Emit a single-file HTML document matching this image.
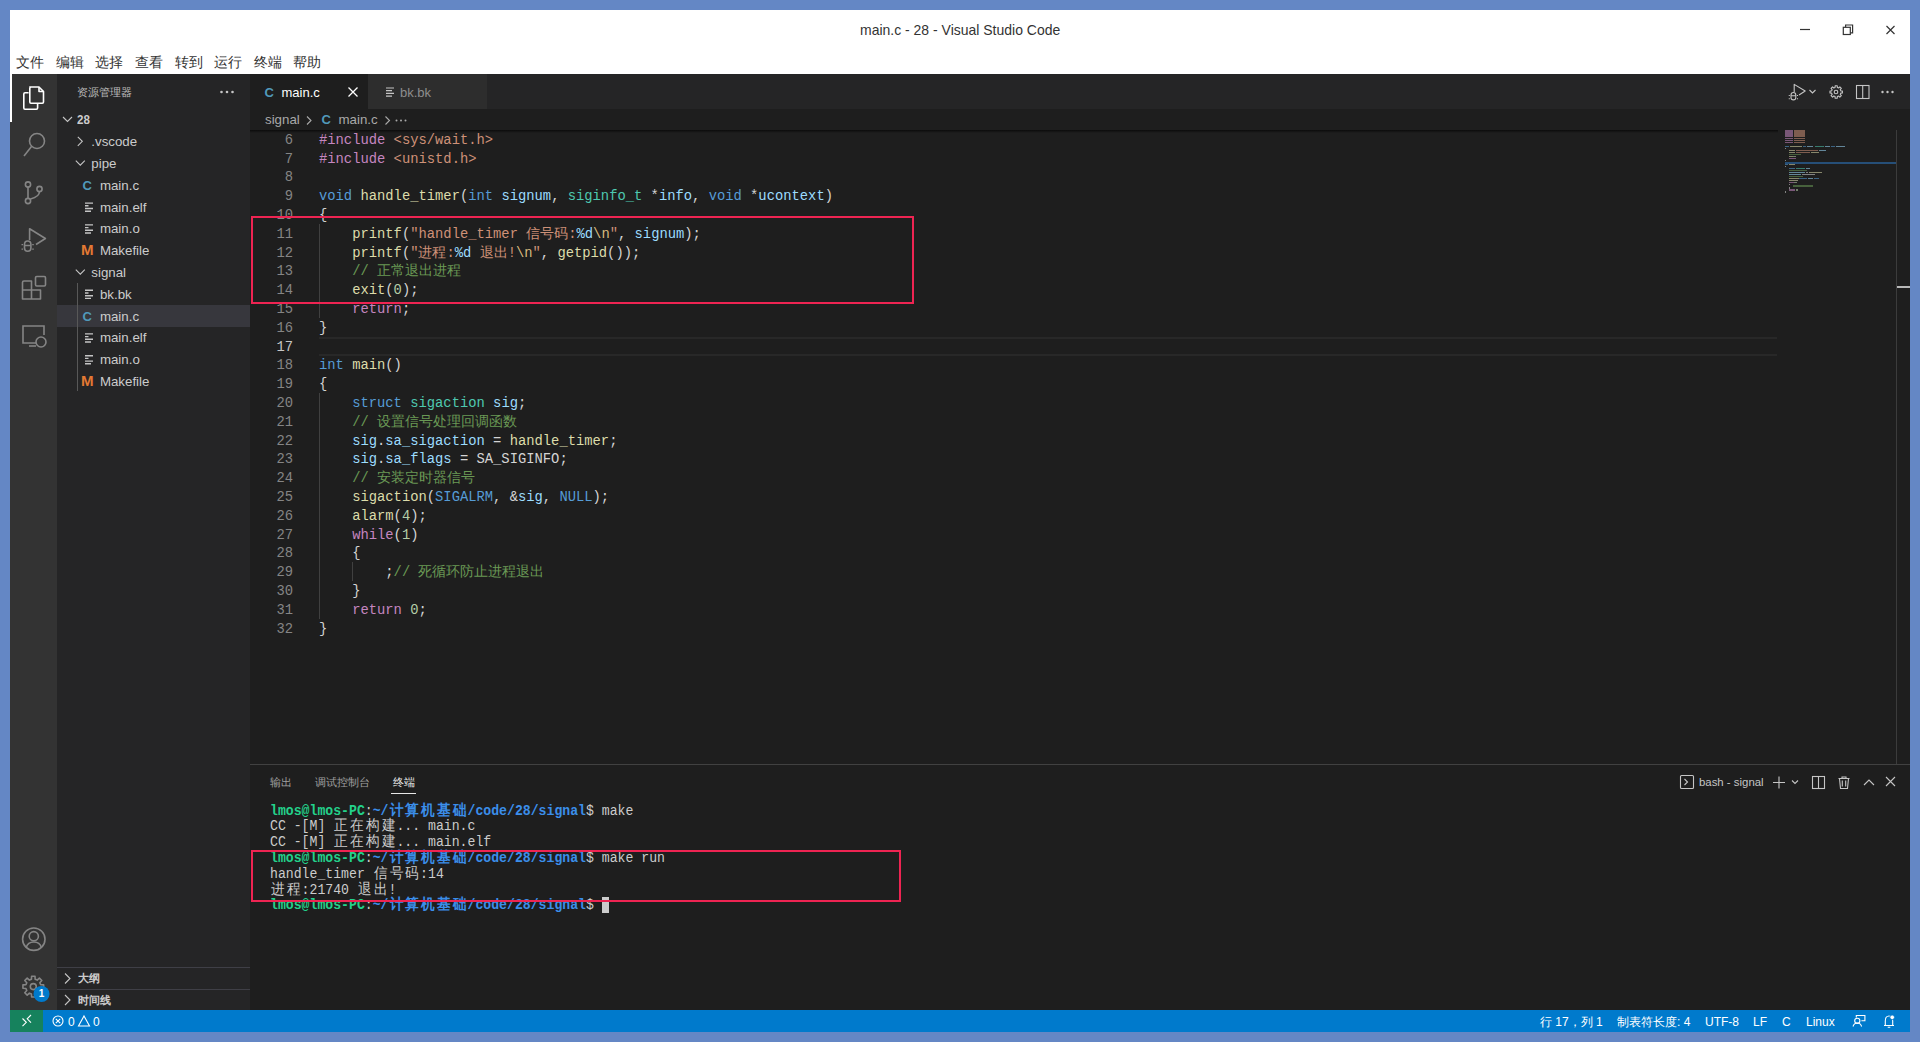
<!DOCTYPE html><html><head><meta charset="utf-8"><style>
*{box-sizing:border-box}
html,body{margin:0;padding:0}
body{width:1920px;height:1042px;overflow:hidden;background:#6487c5;position:relative;font-family:"Liberation Sans",sans-serif}
.a{position:absolute}
.t{white-space:pre}
svg{position:absolute;overflow:visible}
.menu{top:53px;font-size:13.5px;color:#333;line-height:20px;font-weight:500}
.code{font-family:"Liberation Mono",monospace;font-size:13.82px;line-height:18.8px;color:#d4d4d4;white-space:pre}
.ln{color:#858585;text-align:right;width:44px;left:249px}
.k{color:#569cd6}.c{color:#c586c0}.f{color:#dcdcaa}.s{color:#ce9178}.v{color:#9cdcfe}.ty{color:#4ec9b0}.cm{color:#6a9955}.n{color:#b5cea8}.e{color:#d7ba7d}
.tree{font-size:13.3px;color:#cccccc;line-height:22px}
.term{font-family:"Liberation Mono",monospace;font-size:14.5px;line-height:15.8px;transform:scaleX(0.9080);transform-origin:0 0;color:#cccccc;white-space:pre}
.w{display:inline-block;width:17.40px;text-align:center}
.g{color:#23d18b;font-weight:bold}.b{color:#3b8eea;font-weight:bold}
.sb{font-size:12px;color:#fff;line-height:22px;top:1010.8px}
</style></head><body>
<div class="a" style="left:10px;top:10px;width:1900px;height:64px;background:#fff"></div>
<div class="a t" style="left:859.5px;top:21px;font-size:15px;color:#333;line-height:18px;transform:scaleX(0.932);transform-origin:0 0">main.c - 28 - Visual Studio Code</div>
<div class="a t menu" style="left:16px">文件</div>
<div class="a t menu" style="left:56px">编辑</div>
<div class="a t menu" style="left:95px">选择</div>
<div class="a t menu" style="left:135px">查看</div>
<div class="a t menu" style="left:175px">转到</div>
<div class="a t menu" style="left:214px">运行</div>
<div class="a t menu" style="left:254px">终端</div>
<div class="a t menu" style="left:293px">帮助</div>
<svg style="left:0;top:0" width="1920" height="80"><g stroke="#333" stroke-width="1.2" fill="none"><line x1="1800" y1="29.5" x2="1810" y2="29.5"/><rect x="1843.3" y="27.3" width="7" height="7.2"/><path d="M1845.6 27.3v-2.3h7v7.9h-2.3"/><path d="M1886.5 26l8 8M1894.5 26l-8 8"/></g></svg>
<div class="a" style="left:10px;top:74px;width:47px;height:936px;background:#333333"></div>
<div class="a" style="left:57px;top:74px;width:192.5px;height:936px;background:#252526"></div>
<div class="a" style="left:249.5px;top:74px;width:1660.5px;height:936px;background:#1e1e1e"></div>
<div class="a" style="left:10px;top:1010px;width:1900px;height:22px;background:#007acc"></div>
<div class="a" style="left:10px;top:74px;width:2px;height:47.5px;background:#fff"></div>
<svg style="left:0;top:0" width="60" height="1010"><g fill="none" stroke-width="1.6"><g stroke="#fff" stroke-linejoin="round"><path d="M29.8 87h9.2l4.5 4.5v10.6q0 1.2-1.2 1.2h-11.3q-1.2 0-1.2-1.2v-13.9q0-1.2 1.2-1.2z"/><path d="M39 87v4.5h4.5"/><path d="M28.6 92.8h-3.6q-1.2 0-1.2 1.2v14.1q0 1.2 1.2 1.2h11.4q1.2 0 1.2-1.2v-4.8"/></g><g stroke="#858585"><circle cx="37" cy="141" r="7.5"/><path d="M31.5 146.5l-7.5 9.5"/></g><g stroke="#858585"><circle cx="28" cy="184.5" r="2.6"/><circle cx="39.5" cy="189" r="2.6"/><circle cx="28" cy="201" r="2.6"/><path d="M28 187.2v11.2M39.5 191.6q0 5-9 7.5"/></g><g stroke="#858585" stroke-linejoin="round"><path d="M29.6 240v-11.3l15.8 9.8-9.4 6"/><path d="M24.5 244.5q0-3.5 3.2-3.5t3.2 3.5v3.5q0 3.3-3.2 3.3t-3.2-3.3z"/><path d="M24.5 245.5h6.4M22.3 244v1.2M33 244v1.2M22.3 248.5v1.2M33 248.5v1.2"/></g><g stroke="#858585" stroke-linejoin="round"><path d="M22.5 299v-16.5q0-1.5 1.5-1.5h7.5v18zM22.5 290h18v9h-18M31.5 290v9"/><rect x="35.5" y="276.5" width="10" height="9.5" rx="1.2"/></g><g stroke="#858585"><path d="M36 343h-13v-17h21v9"/><path d="M29 346h7"/><circle cx="41" cy="342" r="5"/></g><g stroke="#858585"><circle cx="33.8" cy="939.2" r="11.2"/><circle cx="33.8" cy="936.2" r="4.6"/><path d="M26.2 947.5q1.5-5.5 7.6-5.5t7.6 5.5"/></g><g stroke="#858585" stroke-linejoin="round"><circle cx="33.3" cy="986.6" r="3"/><path d="M40.67 984.76L43.66 984.88L43.66 988.32L40.67 988.44L39.82 990.51L41.84 992.70L39.40 995.14L37.21 993.12L35.14 993.97L35.02 996.96L31.58 996.96L31.46 993.97L29.39 993.12L27.20 995.14L24.76 992.70L26.78 990.51L25.93 988.44L22.94 988.32L22.94 984.88L25.93 984.76L26.78 982.69L24.76 980.50L27.20 978.06L29.39 980.08L31.46 979.23L31.58 976.24L35.02 976.24L35.14 979.23L37.21 980.08L39.40 978.06L41.84 980.50L39.82 982.69Z"/></g></g><circle cx="41.5" cy="994" r="8" fill="#007acc"/></svg>
<div class="a" style="left:33.5px;top:986px;width:16px;height:16px;font-size:10px;font-weight:bold;color:#fff;text-align:center;line-height:16px">1</div>
<div class="a t" style="left:77px;top:84px;font-size:11px;color:#bbbbbb;line-height:16px">资源管理器</div>
<svg style="left:0;top:0" width="260" height="100"><g fill="#c5c5c5"><circle cx="221.5" cy="92" r="1.3"/><circle cx="227" cy="92" r="1.3"/><circle cx="232.5" cy="92" r="1.3"/></g></svg>
<div class="a" style="left:57px;top:304.80px;width:192.5px;height:21.8px;background:#37373d"></div>
<div class="a" style="left:77px;top:283.00px;width:1px;height:108.20px;background:#585858"></div>
<div class="a t tree" style="left:77px;top:109.30px;line-height:21.8px;font-weight:bold;transform:scaleX(0.87);transform-origin:0 0">28</div>
<div class="a t tree" style="left:91.3px;top:131.10px;line-height:21.8px;font-weight:normal">.vscode</div>
<div class="a t tree" style="left:91.3px;top:152.90px;line-height:21.8px;font-weight:normal">pipe</div>
<div class="a t" style="left:82.5px;top:174.70px;font-size:13px;font-weight:bold;color:#519aba;line-height:21.8px">C</div>
<div class="a t tree" style="left:99.9px;top:174.70px;line-height:21.8px;font-weight:normal">main.c</div>
<div class="a t tree" style="left:99.9px;top:196.50px;line-height:21.8px;font-weight:normal">main.elf</div>
<div class="a t tree" style="left:99.9px;top:218.30px;line-height:21.8px;font-weight:normal">main.o</div>
<div class="a t" style="left:80.5px;top:240.10px;font-size:14px;font-weight:bold;color:#e37933;line-height:21.8px;transform:scaleX(1.08);transform-origin:0 0">M</div>
<div class="a t tree" style="left:99.9px;top:240.10px;line-height:21.8px;font-weight:normal">Makefile</div>
<div class="a t tree" style="left:91.3px;top:261.90px;line-height:21.8px;font-weight:normal">signal</div>
<div class="a t tree" style="left:99.9px;top:283.70px;line-height:21.8px;font-weight:normal">bk.bk</div>
<div class="a t" style="left:82.5px;top:305.50px;font-size:13px;font-weight:bold;color:#519aba;line-height:21.8px">C</div>
<div class="a t tree" style="left:99.9px;top:305.50px;line-height:21.8px;font-weight:normal">main.c</div>
<div class="a t tree" style="left:99.9px;top:327.30px;line-height:21.8px;font-weight:normal">main.elf</div>
<div class="a t tree" style="left:99.9px;top:349.10px;line-height:21.8px;font-weight:normal">main.o</div>
<div class="a t" style="left:80.5px;top:370.90px;font-size:14px;font-weight:bold;color:#e37933;line-height:21.8px;transform:scaleX(1.08);transform-origin:0 0">M</div>
<div class="a t tree" style="left:99.9px;top:370.90px;line-height:21.8px;font-weight:normal">Makefile</div>
<svg style="left:0;top:0" width="260" height="1010"><path d="M63.0 117.0l4.5 4.5 4.5-4.5" stroke="#c5c5c5" stroke-width="1.1" fill="none"/><path d="M77.8 136.8l4.5 4.5-4.5 4.5" stroke="#c5c5c5" stroke-width="1.1" fill="none"/><path d="M75.8 160.6l4.5 4.5 4.5-4.5" stroke="#c5c5c5" stroke-width="1.1" fill="none"/><g stroke="#c5c5c5" stroke-width="1.4"><path d="M85 203.1h8M85 205.8h3.5M85 208.5h8M85 211.2h6"/></g><g stroke="#c5c5c5" stroke-width="1.4"><path d="M85 224.9h8M85 227.6h3.5M85 230.3h8M85 233.0h6"/></g><path d="M75.8 269.6l4.5 4.5 4.5-4.5" stroke="#c5c5c5" stroke-width="1.1" fill="none"/><g stroke="#c5c5c5" stroke-width="1.4"><path d="M85 290.3h8M85 293.0h3.5M85 295.7h8M85 298.4h6"/></g><g stroke="#c5c5c5" stroke-width="1.4"><path d="M85 333.9h8M85 336.6h3.5M85 339.3h8M85 342.0h6"/></g><g stroke="#c5c5c5" stroke-width="1.4"><path d="M85 355.7h8M85 358.4h3.5M85 361.1h8M85 363.8h6"/></g></svg>
<div class="a" style="left:57px;top:967px;width:192.5px;height:1px;background:#3f3f46"></div>
<div class="a" style="left:57px;top:989px;width:192.5px;height:1px;background:#3f3f46"></div>
<svg style="left:0;top:0" width="260" height="1010"><g stroke="#c5c5c5" stroke-width="1.1" fill="none"><path d="M65 973.5l5 5-5 5"/><path d="M65 995l5 5-5 5"/></g></svg>
<div class="a t" style="left:77.5px;top:970px;font-size:11px;font-weight:bold;color:#cccccc;line-height:16px">大纲</div>
<div class="a t" style="left:77.5px;top:992px;font-size:11px;font-weight:bold;color:#cccccc;line-height:16px">时间线</div>
<div class="a" style="left:249.5px;top:74px;width:1660.5px;height:35px;background:#252526"></div>
<div class="a" style="left:249.5px;top:74px;width:118px;height:35px;background:#1e1e1e"></div>
<div class="a" style="left:367.5px;top:74px;width:119px;height:35px;background:#2d2d2d"></div>
<div class="a t" style="left:264.5px;top:83.7px;font-size:13px;font-weight:bold;color:#519aba;line-height:18px">C</div>
<div class="a t" style="left:281.5px;top:83.7px;font-size:13px;color:#ffffff;line-height:18px">main.c</div>
<svg style="left:0;top:0" width="500" height="110"><path d="M348.5 87.5l9 9M357.5 87.5l-9 9" stroke="#fff" stroke-width="1.3"/><g stroke="#c5c5c5" stroke-width="1.2"><path d="M386 88h8M386 90.7h6M386 93.4h8M386 96.1h6"/></g></svg>
<div class="a t" style="left:400px;top:83.7px;font-size:13px;color:#8d8d8d;line-height:18px">bk.bk</div>
<svg style="left:0;top:0" width="1920" height="110"><g fill="none" stroke="#c5c5c5" stroke-width="1.1"><path stroke-linejoin="round" d="M1794.2 92v-7.6l11 6.6-6.2 4"/><path d="M1791 95q0-2.5 2.4-2.5t2.4 2.5v2.5q0 2.4-2.4 2.4t-2.4-2.4zM1791 95.8h4.8M1789.3 95v1M1797.5 95v1M1789.3 98.3v1M1797.5 98.3v1"/><path d="M1809.5 90l3 3 3-3"/><circle cx="1836" cy="92" r="1.8"/><path stroke-linejoin="round" d="M1840.76 90.86L1842.41 90.97L1842.41 93.03L1840.76 93.14L1840.23 94.42L1841.33 95.66L1839.86 97.13L1838.62 96.03L1837.34 96.56L1837.23 98.21L1835.17 98.21L1835.06 96.56L1833.78 96.03L1832.54 97.13L1831.07 95.66L1832.17 94.42L1831.64 93.14L1829.99 93.03L1829.99 90.97L1831.64 90.86L1832.17 89.58L1831.07 88.34L1832.54 86.87L1833.78 87.97L1835.06 87.44L1835.17 85.79L1837.23 85.79L1837.34 87.44L1838.62 87.97L1839.86 86.87L1841.33 88.34L1840.23 89.58Z"/><rect x="1856.5" y="85.5" width="12.5" height="13"/><path d="M1862.7 85.5v13"/></g><g fill="#c5c5c5"><circle cx="1882.5" cy="92" r="1.2"/><circle cx="1887.5" cy="92" r="1.2"/><circle cx="1892.5" cy="92" r="1.2"/></g></svg>
<div class="a t" style="left:265px;top:111px;font-size:13.3px;color:#a9a9a9;line-height:18px">signal</div>
<div class="a t" style="left:321.5px;top:111px;font-size:13px;font-weight:bold;color:#519aba;line-height:18px">C</div>
<div class="a t" style="left:338.5px;top:111px;font-size:13.3px;color:#a9a9a9;line-height:18px">main.c</div>
<svg style="left:0;top:0" width="500" height="140"><g fill="none" stroke="#a9a9a9" stroke-width="1.1"><path d="M307 116.5l4 4-4 4M385.5 116.5l4 4-4 4"/></g><g fill="#a9a9a9"><circle cx="396.5" cy="120.5" r="1"/><circle cx="401" cy="120.5" r="1"/><circle cx="405.5" cy="120.5" r="1"/></g></svg>
<div class="a" style="left:249.5px;top:130px;width:1528px;height:3px;background:linear-gradient(#000000a0,#00000000)"></div>
<div class="a" style="left:319px;top:336.80px;width:1458px;height:18.8px;border-top:2px solid #282828;border-bottom:2px solid #282828"></div>
<div class="a" style="left:319px;top:224.00px;width:1px;height:94.00px;background:#404040"></div>
<div class="a" style="left:319px;top:393.20px;width:1px;height:225.60px;background:#404040"></div>
<div class="a" style="left:352px;top:562.40px;width:1px;height:18.80px;background:#404040"></div>
<div class="a code ln" style="top:130.8px"><div>6</div><div>7</div><div>8</div><div>9</div><div>10</div><div>11</div><div>12</div><div>13</div><div>14</div><div>15</div><div>16</div><div style="color:#c6c6c6">17</div><div>18</div><div>19</div><div>20</div><div>21</div><div>22</div><div>23</div><div>24</div><div>25</div><div>26</div><div>27</div><div>28</div><div>29</div><div>30</div><div>31</div><div>32</div></div>
<div class="a code" style="left:319px;top:130.8px;width:1458px"><div><span class="c">#include</span> <span class="s">&lt;sys/wait.h&gt;</span></div><div><span class="c">#include</span> <span class="s">&lt;unistd.h&gt;</span></div><div> </div><div><span class="k">void</span> <span class="f">handle_timer</span>(<span class="k">int</span> <span class="v">signum</span>, <span class="ty">siginfo_t</span> *<span class="v">info</span>, <span class="k">void</span> *<span class="v">ucontext</span>)</div><div>{</div><div>    <span class="f">printf</span>(<span class="s">"handle_timer 信号码:</span><span class="v">%d</span><span class="e">\n</span><span class="s">"</span>, <span class="v">signum</span>);</div><div>    <span class="f">printf</span>(<span class="s">"进程:</span><span class="v">%d</span><span class="s"> 退出!</span><span class="e">\n</span><span class="s">"</span>, <span class="f">getpid</span>());</div><div>    <span class="cm">// 正常退出进程</span></div><div>    <span class="f">exit</span>(<span class="n">0</span>);</div><div>    <span class="c">return</span>;</div><div>}</div><div> </div><div><span class="k">int</span> <span class="f">main</span>()</div><div>{</div><div>    <span class="k">struct</span> <span class="ty">sigaction</span> <span class="v">sig</span>;</div><div>    <span class="cm">// 设置信号处理回调函数</span></div><div>    <span class="v">sig</span>.<span class="v">sa_sigaction</span> = <span class="f">handle_timer</span>;</div><div>    <span class="v">sig</span>.<span class="v">sa_flags</span> = SA_SIGINFO;</div><div>    <span class="cm">// 安装定时器信号</span></div><div>    <span class="f">sigaction</span>(<span class="k">SIGALRM</span>, &amp;<span class="v">sig</span>, <span class="k">NULL</span>);</div><div>    <span class="f">alarm</span>(<span class="n">4</span>);</div><div>    <span class="c">while</span>(<span class="n">1</span>)</div><div>    {</div><div>        ;<span class="cm">// 死循环防止进程退出</span></div><div>    }</div><div>    <span class="c">return</span> <span class="n">0</span>;</div><div>}</div></div>
<div class="a" style="left:1896px;top:130px;width:1px;height:634px;background:#3c3c3c"></div>
<div class="a" style="left:1897px;top:286.3px;width:13px;height:1.6px;background:#b8b8b8"></div>
<div class="a" style="left:1785px;top:162.3px;width:111px;height:1.4px;background:#264f78"></div>
<div style="opacity:0.55"><div class="a" style="left:1785px;top:130.0px;width:8px;height:1.6px;background:#c586c0"></div><div class="a" style="left:1794px;top:130.0px;width:11px;height:1.6px;background:#ce9178"></div><div class="a" style="left:1785px;top:132.0px;width:8px;height:1.6px;background:#c586c0"></div><div class="a" style="left:1794px;top:132.0px;width:11px;height:1.6px;background:#ce9178"></div><div class="a" style="left:1785px;top:134.0px;width:8px;height:1.6px;background:#c586c0"></div><div class="a" style="left:1794px;top:134.0px;width:11px;height:1.6px;background:#ce9178"></div><div class="a" style="left:1785px;top:135.9px;width:8px;height:1.6px;background:#c586c0"></div><div class="a" style="left:1794px;top:135.9px;width:11px;height:1.6px;background:#ce9178"></div><div class="a" style="left:1785px;top:137.9px;width:8px;height:1.6px;background:#c586c0"></div><div class="a" style="left:1794px;top:137.9px;width:11px;height:1.6px;background:#ce9178"></div><div class="a" style="left:1785px;top:139.9px;width:8px;height:1.6px;background:#c586c0"></div><div class="a" style="left:1794px;top:139.9px;width:11px;height:1.6px;background:#ce9178"></div><div class="a" style="left:1785px;top:141.9px;width:8px;height:1.6px;background:#c586c0"></div><div class="a" style="left:1794px;top:141.9px;width:11px;height:1.6px;background:#ce9178"></div><div class="a" style="left:1785px;top:145.8px;width:4px;height:1.6px;background:#569cd6"></div><div class="a" style="left:1790px;top:145.8px;width:12px;height:1.6px;background:#dcdcaa"></div><div class="a" style="left:1803px;top:145.8px;width:3px;height:1.6px;background:#569cd6"></div><div class="a" style="left:1807px;top:145.8px;width:6px;height:1.6px;background:#9cdcfe"></div><div class="a" style="left:1815px;top:145.8px;width:9px;height:1.6px;background:#4ec9b0"></div><div class="a" style="left:1825px;top:145.8px;width:5px;height:1.6px;background:#9cdcfe"></div><div class="a" style="left:1831px;top:145.8px;width:4px;height:1.6px;background:#569cd6"></div><div class="a" style="left:1836px;top:145.8px;width:9px;height:1.6px;background:#9cdcfe"></div><div class="a" style="left:1785px;top:147.8px;width:1px;height:1.6px;background:#d4d4d4"></div><div class="a" style="left:1789px;top:149.8px;width:6px;height:1.6px;background:#dcdcaa"></div><div class="a" style="left:1796px;top:149.8px;width:22px;height:1.6px;background:#ce9178"></div><div class="a" style="left:1819px;top:149.8px;width:7px;height:1.6px;background:#9cdcfe"></div><div class="a" style="left:1789px;top:151.8px;width:6px;height:1.6px;background:#dcdcaa"></div><div class="a" style="left:1796px;top:151.8px;width:14px;height:1.6px;background:#ce9178"></div><div class="a" style="left:1811px;top:151.8px;width:8px;height:1.6px;background:#dcdcaa"></div><div class="a" style="left:1789px;top:153.8px;width:12px;height:1.6px;background:#6a9955"></div><div class="a" style="left:1789px;top:155.7px;width:4px;height:1.6px;background:#dcdcaa"></div><div class="a" style="left:1793px;top:155.7px;width:3px;height:1.6px;background:#b5cea8"></div><div class="a" style="left:1789px;top:157.7px;width:7px;height:1.6px;background:#c586c0"></div><div class="a" style="left:1785px;top:159.7px;width:1px;height:1.6px;background:#d4d4d4"></div><div class="a" style="left:1785px;top:163.7px;width:3px;height:1.6px;background:#569cd6"></div><div class="a" style="left:1789px;top:163.7px;width:6px;height:1.6px;background:#dcdcaa"></div><div class="a" style="left:1785px;top:165.6px;width:1px;height:1.6px;background:#d4d4d4"></div><div class="a" style="left:1789px;top:167.6px;width:6px;height:1.6px;background:#569cd6"></div><div class="a" style="left:1796px;top:167.6px;width:9px;height:1.6px;background:#4ec9b0"></div><div class="a" style="left:1806px;top:167.6px;width:4px;height:1.6px;background:#9cdcfe"></div><div class="a" style="left:1789px;top:169.6px;width:18px;height:1.6px;background:#6a9955"></div><div class="a" style="left:1789px;top:171.6px;width:16px;height:1.6px;background:#9cdcfe"></div><div class="a" style="left:1806px;top:171.6px;width:2px;height:1.6px;background:#d4d4d4"></div><div class="a" style="left:1809px;top:171.6px;width:13px;height:1.6px;background:#dcdcaa"></div><div class="a" style="left:1789px;top:173.6px;width:12px;height:1.6px;background:#9cdcfe"></div><div class="a" style="left:1802px;top:173.6px;width:2px;height:1.6px;background:#d4d4d4"></div><div class="a" style="left:1804px;top:173.6px;width:11px;height:1.6px;background:#d4d4d4"></div><div class="a" style="left:1789px;top:175.5px;width:14px;height:1.6px;background:#6a9955"></div><div class="a" style="left:1789px;top:177.5px;width:10px;height:1.6px;background:#dcdcaa"></div><div class="a" style="left:1799px;top:177.5px;width:8px;height:1.6px;background:#569cd6"></div><div class="a" style="left:1808px;top:177.5px;width:5px;height:1.6px;background:#9cdcfe"></div><div class="a" style="left:1814px;top:177.5px;width:5px;height:1.6px;background:#569cd6"></div><div class="a" style="left:1789px;top:179.5px;width:9px;height:1.6px;background:#dcdcaa"></div><div class="a" style="left:1789px;top:181.5px;width:5px;height:1.6px;background:#c586c0"></div><div class="a" style="left:1794px;top:181.5px;width:3px;height:1.6px;background:#b5cea8"></div><div class="a" style="left:1789px;top:183.5px;width:1px;height:1.6px;background:#d4d4d4"></div><div class="a" style="left:1793px;top:185.4px;width:20px;height:1.6px;background:#6a9955"></div><div class="a" style="left:1789px;top:187.4px;width:1px;height:1.6px;background:#d4d4d4"></div><div class="a" style="left:1789px;top:189.4px;width:6px;height:1.6px;background:#c586c0"></div><div class="a" style="left:1796px;top:189.4px;width:2px;height:1.6px;background:#b5cea8"></div><div class="a" style="left:1785px;top:191.4px;width:1px;height:1.6px;background:#d4d4d4"></div></div>
<div class="a" style="left:249.5px;top:764px;width:1660.5px;height:1px;background:#414141"></div>
<div class="a t" style="left:269.5px;top:774px;font-size:11px;color:#a0a0a0;line-height:16px">输出</div>
<div class="a t" style="left:314.5px;top:774px;font-size:11px;color:#a0a0a0;line-height:16px">调试控制台</div>
<div class="a t" style="left:393px;top:774px;font-size:11px;color:#e7e7e7;line-height:16px">终端</div>
<div class="a" style="left:391px;top:792.5px;width:25px;height:1px;background:#e7e7e7"></div>
<svg style="left:0;top:0" width="1920" height="800"><g fill="none" stroke="#c5c5c5" stroke-width="1.1"><rect x="1680.5" y="775.5" width="13" height="13" rx="1"/><path d="M1684.5 779l3 3-3 3"/><path d="M1779 776.5v12M1773 782.5h12"/><path d="M1792 780.5l3 3 3-3"/><rect x="1812.5" y="776.5" width="12" height="12"/><path d="M1818.5 776.5v12"/><path d="M1838.5 778.5h11M1842 778.5v-1.5h4v1.5M1839.5 778.5l1 10h7l1-10M1842.3 780.5v6M1845.7 780.5v6"/><path d="M1864 785l5-5 5 5"/><path d="M1886 777l9 9M1895 777l-9 9"/></g></svg>
<div class="a t" style="left:1699px;top:774px;font-size:11.4px;color:#c5c5c5;line-height:16px">bash - signal</div>
<div class="a term" style="left:269.7px;top:803.50px"><span class="g">lmos@lmos-PC</span>:<span class="b">~/<span class="w">计</span><span class="w">算</span><span class="w">机</span><span class="w">基</span><span class="w">础</span>/code/28/signal</span>$ make</div>
<div class="a term" style="left:269.7px;top:819.30px">CC -[M] <span class="w">正</span><span class="w">在</span><span class="w">构</span><span class="w">建</span>... main.c</div>
<div class="a term" style="left:269.7px;top:835.10px">CC -[M] <span class="w">正</span><span class="w">在</span><span class="w">构</span><span class="w">建</span>... main.elf</div>
<div class="a term" style="left:269.7px;top:850.90px"><span class="g">lmos@lmos-PC</span>:<span class="b">~/<span class="w">计</span><span class="w">算</span><span class="w">机</span><span class="w">基</span><span class="w">础</span>/code/28/signal</span>$ make run</div>
<div class="a term" style="left:269.7px;top:866.70px">handle_timer <span class="w">信</span><span class="w">号</span><span class="w">码</span>:14</div>
<div class="a term" style="left:269.7px;top:882.50px"><span class="w">进</span><span class="w">程</span>:21740 <span class="w">退</span><span class="w">出</span>!</div>
<div class="a term" style="left:269.7px;top:898.30px"><span class="g">lmos@lmos-PC</span>:<span class="b">~/<span class="w">计</span><span class="w">算</span><span class="w">机</span><span class="w">基</span><span class="w">础</span>/code/28/signal</span>$ </div>
<div class="a" style="left:601.50px;top:897.10px;width:7.90px;height:15.8px;background:#cccccc"></div>
<div class="a" style="left:251px;top:216px;width:663px;height:88px;border:2.2px solid #ee2452"></div>
<div class="a" style="left:251px;top:849.8px;width:650px;height:52.7px;border:2.2px solid #ee2452"></div>
<div class="a" style="left:10px;top:1010px;width:33px;height:22px;background:#16825d"></div>
<svg style="left:0;top:0" width="1920" height="1042"><g fill="none" stroke="#fff" stroke-width="1.1"><path d="M22.5 1018.5l3.8 3.8-3.8 3.8M31 1015l-3.8 3.8 3.8 3.8"/><circle cx="58" cy="1021" r="5"/><path d="M55.8 1018.8l4.4 4.4M60.2 1018.8l-4.4 4.4"/><path d="M84 1016l5.5 10h-11z"/><circle cx="1857.3" cy="1020.8" r="2.6"/><path d="M1853 1026.5q1-3.5 4.3-3.5t4.3 3.5M1856.3 1017.5v-2h8.6v5.2h-3.5"/><path d="M1884 1025.5h10M1885.3 1025.5v-4.5q0-5 3.7-5t3.7 5v4.5M1887.7 1027.3h2.6"/></g><circle cx="1892.2" cy="1017.3" r="2.3" fill="#fff" stroke="#007acc" stroke-width="0.8"/></svg>
<div class="a t sb" style="left:68px">0</div>
<div class="a t sb" style="left:93px">0</div>
<div class="a t sb" style="left:1540px">行 17，列 1</div>
<div class="a t sb" style="left:1617px">制表符长度: 4</div>
<div class="a t sb" style="left:1705px">UTF-8</div>
<div class="a t sb" style="left:1753px">LF</div>
<div class="a t sb" style="left:1782px">C</div>
<div class="a t sb" style="left:1806px">Linux</div>
</body></html>
